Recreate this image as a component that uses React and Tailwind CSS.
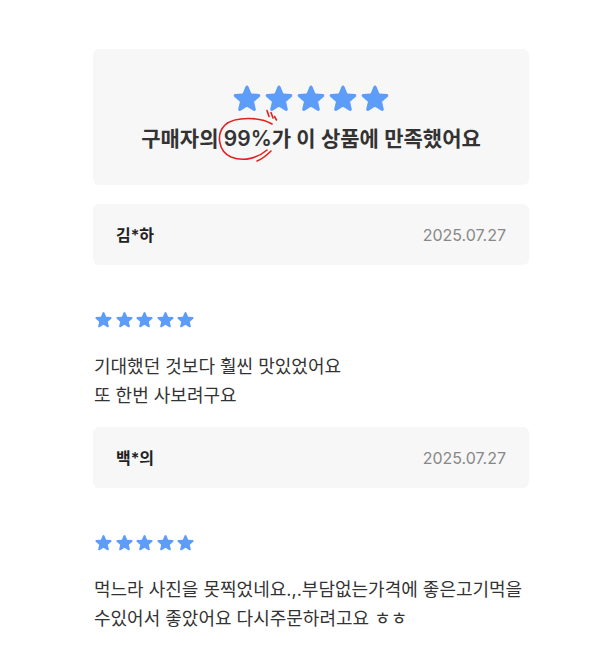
const FONT = { fontFamily: 'Inter, "Noto Sans CJK KR", "Noto Sans", sans-serif' };

const reviews = [
  {
    name: '김*하',
    date: '2025.07.27',
    lines: ['기대했던 것보다 훨씬 맛있었어요', '또 한번 사보려구요'],
  },
  {
    name: '백*의',
    date: '2025.07.27',
    lines: ['먹느라 사진을 못찍었네요.,.부담없는가격에 좋은고기먹을', '수있어서 좋았어요 다시주문하려고요 ㅎㅎ'],
  },
];

function Star({ className }) {
  return (
    <svg viewBox="3 2.6 18 18" className={className} fill="#5d9cf8">
      <path d="M12 17.27l4.15 2.51c.76.46 1.69-.22 1.49-1.08l-1.1-4.72 3.67-3.18c.67-.58.31-1.68-.57-1.75l-4.83-.41-1.89-4.46c-.34-.81-1.5-.81-1.84 0L9.19 8.63l-4.83.41c-.88.07-1.24 1.17-.57 1.75l3.67 3.18-1.1 4.72c-.2.86.73 1.54 1.49 1.08L12 17.27z" />
    </svg>
  );
}

function Stars({ size, gap }) {
  return (
    <div className={`flex ${gap}`}>
      {[0, 1, 2, 3, 4].map((i) => (
        <Star key={i} className={size} />
      ))}
    </div>
  );
}

export default function App() {
  return (
    <div className="min-h-screen bg-white pt-[49px] pl-[93px]" style={FONT}>
      <div className="w-[436px]">
        <div className="rounded-md bg-[#f7f7f7] pt-[35px] pb-[31px] flex flex-col items-center">
          <Stars size="w-[28px] h-[28px]" gap="gap-[4px]" />
          <p className="mt-[12px] text-[21px] leading-[30px] font-semibold text-[#333]">
            구매자의{' '}
            <span className="relative inline-block">
              99%
              <svg
                viewBox="218 108 64 56"
                className="absolute left-[-7px] top-[-16px] w-[64px] h-[56px] overflow-visible"
                fill="none"
                stroke="#e3201f"
                strokeWidth="1.6"
                strokeLinecap="round"
              >
                <path d="M273 124 C262 117, 236 116, 226 125 C217 134, 219 151, 232 157 C245 162, 259 158, 268 150" />
                <path d="M258 161 C263 159, 268 155, 272 151" />
                <path d="M268 110.5 L270 116.5" />
                <path d="M272 112.5 L274 118" />
                <path d="M275.5 116.5 L277.5 120" />
              </svg>
            </span>
            가 이 상품에 만족했어요
          </p>
        </div>

        <div className="mt-[19px]">
          {reviews.map((r) => (
            <div key={r.name} className="mb-[17px]">
              <div className="h-[61px] rounded-md bg-[#f7f7f7] px-[23px] flex items-center justify-between">
                <span className="text-[16px] font-semibold text-[#222]">{r.name}</span>
                <span className="text-[16px] text-[#888]">{r.date}</span>
              </div>
              <div className="pt-[46px] pl-[2px]">
                <Stars size="w-[17px] h-[17px]" gap="gap-[3.5px]" />
              </div>
              <div className="mt-[24px] pl-[1px] text-[18px] leading-[29px] text-[#333]">
                {r.lines.map((l) => (
                  <p key={l}>{l}</p>
                ))}
              </div>
            </div>
          ))}
        </div>
      </div>
    </div>
  );
}
